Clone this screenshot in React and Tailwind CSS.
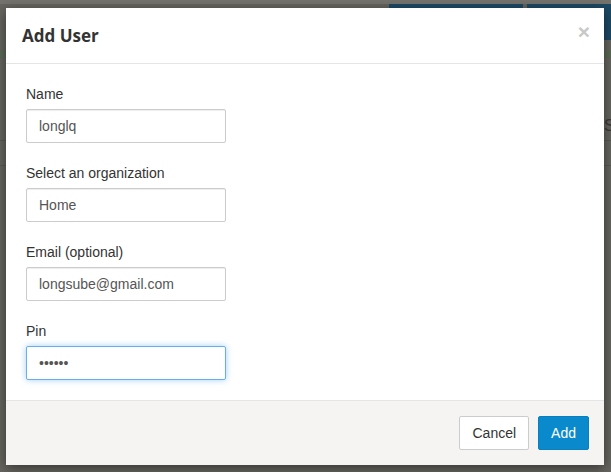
import { useState } from "react";

function Field({ label, value, type = "text", focused }) {
  return (
    <div className="flex flex-col">
      <label className="text-[14px] leading-5 text-[#333] mb-[5px]">{label}</label>
      <input
        type={type}
        defaultValue={value}
        className={
          "w-[200px] h-[34px] px-3 text-[14px] text-[#555] bg-white border rounded-[2px] outline-none " +
          (focused
            ? "border-[#66afe9] shadow-[0_0_6px_rgba(102,175,233,0.6)]"
            : "border-[#ccc] shadow-[inset_0_1px_1px_rgba(0,0,0,0.075)]")
        }
      />
    </div>
  );
}

export default function App() {
  const [open] = useState(true);

  return (
    <div
      className="relative w-[611px] h-[472px] overflow-hidden bg-[#676660]"
      style={{ fontFamily: '"Liberation Sans", Arial, sans-serif' }}
    >
      {/* page behind the overlay */}
      <div className="absolute top-0 left-0 w-full h-[4px] bg-[#74736d]" />
      <div className="absolute top-[4px] left-[389px] w-[134px] h-[30px] bg-[#1d4a66]" />
      <div className="absolute top-[4px] left-[527px] w-[84px] h-[36px] bg-[#1d4a66]" />
      <div className="absolute top-[50px] left-0 w-full h-[8px] bg-[#5e6b58]" />
      <div className="absolute top-[114px] left-[604px] text-[16px] text-[#3a3a36]">S</div>
      <div className="absolute top-[140px] left-0 w-full h-px bg-[#5a5a54]" />
      <div className="absolute top-[165px] left-0 w-full h-px bg-[#5a5a54]" />

      {open && (
        <div className="relative pt-[8px] pl-[6px]">
          <div className="w-[598px] h-[457px] bg-white flex flex-col shadow-[0_3px_12px_rgba(0,0,0,0.5)]">
            <div className="flex items-center justify-between h-[56px] pl-4 pr-[14px] border-b border-[#e5e5e5]">
              <h4
                className="text-[17px] font-bold text-[#333]"
                style={{ fontFamily: '"Open Sans", "Noto Sans", sans-serif' }}
              >
                Add User
              </h4>
              <button className="text-[21px] font-bold leading-none text-[#c8c8c8] -mt-2">×</button>
            </div>

            <div className="flex flex-col gap-5 p-5 flex-1">
              <Field label="Name" value="longlq" />
              <Field label="Select an organization" value="Home" />
              <Field label="Email (optional)" value="longsube@gmail.com" />
              <Field label="Pin" value="123456" type="password" focused />
            </div>

            <div className="flex items-center justify-end gap-[9px] h-[65px] px-[15px] bg-[#f5f4f3] border-t border-[#e5e5e5]">
              <button className="h-[34px] px-3 text-[14px] text-[#333] bg-white border border-[#ccc] rounded-[2px]">
                Cancel
              </button>
              <button className="h-[34px] px-3 text-[14px] text-white bg-[#0a8acd] border border-[#0a7fbd] rounded-[2px]">
                Add
              </button>
            </div>
          </div>
        </div>
      )}
    </div>
  );
}
